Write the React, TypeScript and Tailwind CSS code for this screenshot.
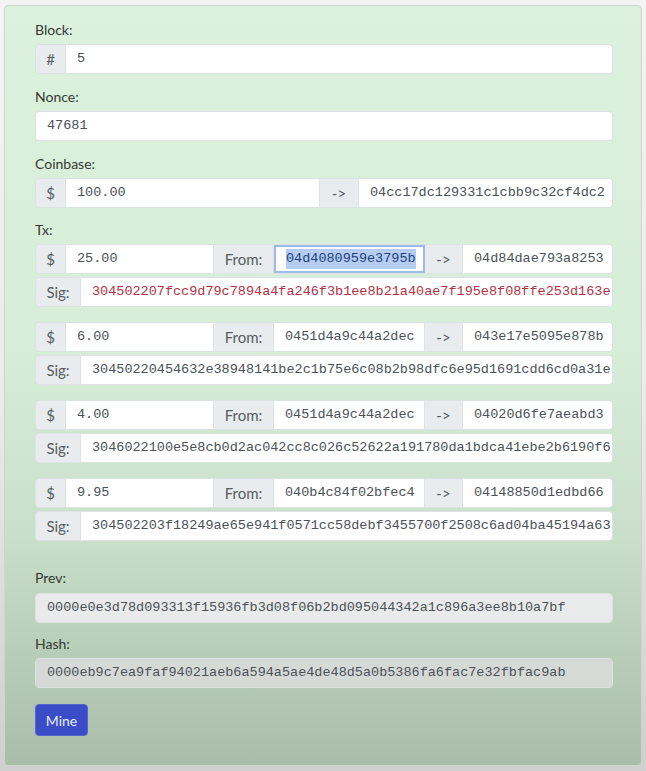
import React from "react";

const sans = "font-['Lato','Open_Sans',sans-serif]";
const mono = "font-['Liberation_Mono',monospace]";

const Label = ({ text, className = "" }: { text: string; className?: string }) => (
    <div className={`h-5 leading-5 mb-[4px] text-[14px] text-[#323a32] ${sans} ${className}`}>{text}</div>
);

const Addon = ({ text, w }: { text: string; w: string }) => (
    <div className={`${w} shrink-0 h-full flex items-center justify-center bg-[#e9ecef] text-[#565c61] text-[15px] ${sans}`}>
        {text}
    </div>
);

const Field = ({ value, w, color = "text-[#4b5157]", bg = "bg-white" }: { value: string; w: string; color?: string; bg?: string }) => (
    <div className={`${w} h-full flex items-center pl-[11px] overflow-hidden whitespace-nowrap text-[13.5px] ${mono} ${color} ${bg}`}>
        {value}
    </div>
);

const Row = ({ children, className = "" }: { children: React.ReactNode; className?: string }) => (
    <div className={`h-[30px] w-[578px] flex rounded-[4px] overflow-hidden border border-[#dde2e5] divide-x divide-[#dde2e5] ${className}`}>
        {children}
    </div>
);

type Tx = { amt: string; from: string; to: string; sig: string; bad?: boolean };

const txs: Tx[] = [
    { amt: "25.00", from: "04d4080959e3795b", to: "04d84dae793a8253", sig: "304502207fcc9d79c7894a4fa246f3b1ee8b21a40ae7f195e8f08ffe253d163e", bad: true },
    { amt: "6.00", from: "0451d4a9c44a2dec", to: "043e17e5095e878b", sig: "30450220454632e38948141be2c1b75e6c08b2b98dfc6e95d1691cdd6cd0a31e" },
    { amt: "4.00", from: "0451d4a9c44a2dec", to: "04020d6fe7aeabd3", sig: "3046022100e5e8cb0d2ac042cc8c026c52622a191780da1bdca41ebe2b6190f6" },
    { amt: "9.95", from: "040b4c84f02bfec4", to: "04148850d1edbd66", sig: "304502203f18249ae65e941f0571cc58debf3455700f2508c6ad04ba45194a63" },
];

const TxGroup = ({ tx, first }: { tx: Tx; first: boolean }) => (
    <div className={first ? "" : "mt-[15px]"}>
        <Row>
            <Addon text="$" w="w-[30px]" />
            <Field value={tx.amt} w="w-[148px]" />
            <Addon text="From:" w="w-[60px]" />
            {first ? (
                <div className={`w-[151px] h-full flex items-center pl-[10px] bg-white border-2 border-[#9dbbe6] text-[13.5px] ${mono}`}>
                    <span className="bg-[#b5cdf0] text-[#23407e]">{tx.from}</span>
                </div>
            ) : (
                <Field value={tx.from} w="w-[151px]" />
            )}
            <Addon text="->" w="w-[38px]" />
            <Field value={tx.to} w="flex-1" />
        </Row>
        <Row className="mt-[3px]">
            <Addon text="Sig:" w="w-[45px]" />
            <Field value={tx.sig} w="flex-1" color={tx.bad ? "text-[#b4313f]" : "text-[#4b5157]"} />
        </Row>
    </div>
);

const App: React.FC = () => {
    return (
        <div className="w-[646px] h-[771px] overflow-hidden bg-[linear-gradient(180deg,#f4f4f4_0%,#ececec_50%,#cfcfcf_100%)] pt-[5px] pl-[4px]">
            <div className="w-[638px] h-[761px] rounded-[4px] border border-[#c8d9c8] bg-[linear-gradient(180deg,#ddf2de_0%,#d6edd7_45%,#c9dfca_70%,#b9ceb9_85%,#a9bda9_100%)] pt-[14px] pl-[30px]">
                <Label text="Block:" />
                <Row>
                    <Addon text="#" w="w-[30px]" />
                    <Field value="5" w="flex-1" />
                </Row>

                <Label text="Nonce:" className="mt-[13px]" />
                <Row>
                    <Field value="47681" w="flex-1" />
                </Row>

                <Label text="Coinbase:" className="mt-[13px]" />
                <Row>
                    <Addon text="$" w="w-[30px]" />
                    <Field value="100.00" w="w-[254px]" />
                    <Addon text="->" w="w-[39px]" />
                    <Field value="04cc17dc129331c1cbb9c32cf4dc2" w="flex-1" />
                </Row>

                <Label text="Tx:" className="mt-[12px]" />
                {txs.map((tx, i) => (
                    <TxGroup key={i} tx={tx} first={i === 0} />
                ))}

                <Label text="Prev:" className="mt-[27px] mb-[5px]" />
                <Row className="border-[#d6dbd8]">
                    <Field value="0000e0e3d78d093313f15936fb3d08f06b2bd095044342a1c896a3ee8b10a7bf" w="flex-1" bg="bg-[#e8ebe9]" />
                </Row>

                <Label text="Hash:" className="mt-[11px]" />
                <Row className="border-[#c9cfcb]">
                    <Field value="0000eb9c7ea9faf94021aeb6a594a5ae4de48d5a0b5386fa6fac7e32fbfac9ab" w="flex-1" bg="bg-[#d5dad7]" />
                </Row>

                <button className={`mt-[16px] w-[53px] h-[32px] rounded-[4px] bg-[#3a4cc6] border border-[#5365d6] text-[#e8ecff] text-[14px] ${sans}`}>
                    Mine
                </button>
            </div>
        </div>
    );
};

export default App;
